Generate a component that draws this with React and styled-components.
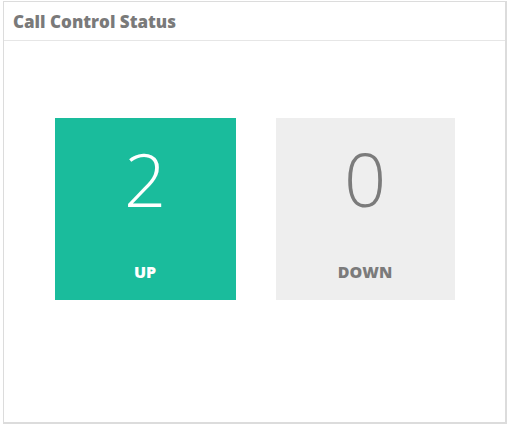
import React from 'react';
import styled, { createGlobalStyle } from 'styled-components';

const GlobalStyle = createGlobalStyle`
  html, body {
    margin: 0;
    padding: 0;
    background: #fff;
    font-family: "Open Sans", "Liberation Sans", sans-serif;
  }
`;

const Page = styled.div`
  padding: 1px 4px 4px 3px;
`;

const Panel = styled.div`
  box-sizing: border-box;
  width: 504px;
  height: 423px;
  border: 1px solid #dcdcdc;
  border-right-width: 2px;
  border-bottom-width: 2px;
  background: #fff;
  display: flex;
  flex-direction: column;
`;

const PanelHeader = styled.div`
  height: 38px;
  border-bottom: 1px solid #e6e6e6;
  display: flex;
  align-items: center;
  padding: 0 9px;
  color: #7a7a7a;
  font-size: 17px;
  font-weight: 800;
`;

const PanelBody = styled.div`
  flex: 1;
  display: flex;
  justify-content: center;
  gap: 40px;
  padding-top: 77px;
`;

const Tile = styled.div`
  width: ${p => p.$w}px;
  height: 182px;
  background: ${p => (p.$up ? '#1abc9c' : '#eeeeee')};
  color: ${p => (p.$up ? '#fff' : '#7b7b7b')};
  display: flex;
  flex-direction: column;
  align-items: center;
`;

const Count = styled.div`
  margin-top: 13px;
  font-size: 74px;
  font-weight: 300;
  line-height: 1.3;
`;

const Label = styled.div`
  margin-top: 34px;
  font-size: 16px;
  font-weight: 800;
`;

const items = [
  { count: 2, label: 'UP', up: true, w: 181 },
  { count: 0, label: 'DOWN', up: false, w: 179 },
];

export default function App() {
  return (
    <>
      <GlobalStyle />
      <Page>
        <Panel>
          <PanelHeader>Call Control Status</PanelHeader>
          <PanelBody>
            {items.map(el => (
              <Tile key={el.label} $up={el.up} $w={el.w}>
                <Count>{el.count}</Count>
                <Label>{el.label}</Label>
              </Tile>
            ))}
          </PanelBody>
        </Panel>
      </Page>
    </>
  );
}
